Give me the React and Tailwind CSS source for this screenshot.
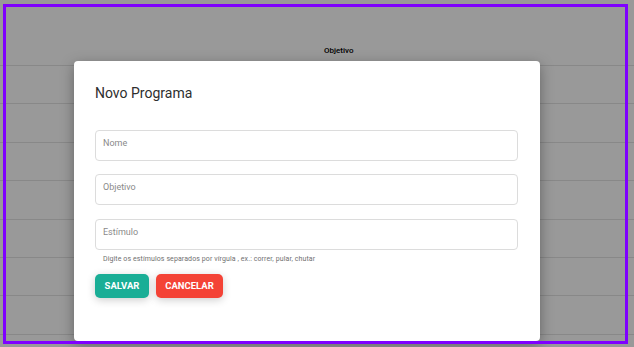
import React from 'react'

const ROWS = [38, 39, 38, 39, 38, 38, 39]

function Field({ placeholder, className = '' }) {
  return (
    <input
      placeholder={placeholder}
      className={`box-border block h-[31px] w-[423px] rounded-[4px] border border-[#dcdcdc] bg-white pt-[6px] pb-[11px] pl-[7px] text-[9px] leading-[12px] text-[#333] outline-none placeholder:text-[#8a8a8a] ${className}`}
    />
  )
}

export default function App() {
  return (
    <div className="relative h-[347px] w-[634px] overflow-hidden bg-white" style={{ fontFamily: 'Roboto, "Liberation Sans", sans-serif' }}>
      {/* table behind the dialog */}
      <div className="flex flex-col">
        <div className="flex h-[66px] items-end border-b border-[#e3e3e3] pb-[9px] pl-[324px]">
          <span className="text-[8px] leading-[10px] font-medium text-black">Objetivo</span>
        </div>
        {ROWS.map((h, i) => (
          <div key={i} className="border-b border-[#e3e3e3]" style={{ height: h }} />
        ))}
      </div>

      {/* overlay */}
      <div className="absolute inset-0 bg-black/40" />

      {/* dialog */}
      <div className="absolute left-[74px] top-[61px] h-[280px] w-[466px] rounded-[4px] bg-white shadow-[0_4px_14px_rgba(0,0,0,0.35)]">
        <div className="flex flex-col pl-[21px] pt-[22px]">
          <h2 className="text-[14px] font-normal leading-[20px] text-[#2e2e2e]">Novo Programa</h2>
          <div className="mt-[27px] flex flex-col">
            <Field placeholder="Nome" />
            <Field placeholder="Objetivo" className="mt-[13px]" />
            <Field placeholder="Estímulo" className="mt-[14px]" />
          </div>
          <p className="mt-[4px] pl-[8px] text-[7px] leading-[10px] tracking-[0.1px] text-[#707070]">
            Digite os estímulos separados por vírgula , ex.: correr, pular, chutar
          </p>
          <div className="mt-[10px] flex gap-[7px]">
            <button className="h-[24px] w-[54px] rounded-[5px] bg-[#1aae96] text-[9.5px] font-bold text-white shadow-[0_2px_8px_rgba(0,0,0,0.2)]">
              SALVAR
            </button>
            <button className="h-[24px] w-[67px] rounded-[5px] bg-[#f44336] text-[9.5px] font-bold text-white shadow-[0_2px_8px_rgba(0,0,0,0.2)]">
              CANCELAR
            </button>
          </div>
        </div>
      </div>

      {/* focus frame */}
      <div className="pointer-events-none absolute left-[3px] top-[4px] h-[340px] w-[625px] border-[3px] border-[#7f00ff]" />
    </div>
  )
}
